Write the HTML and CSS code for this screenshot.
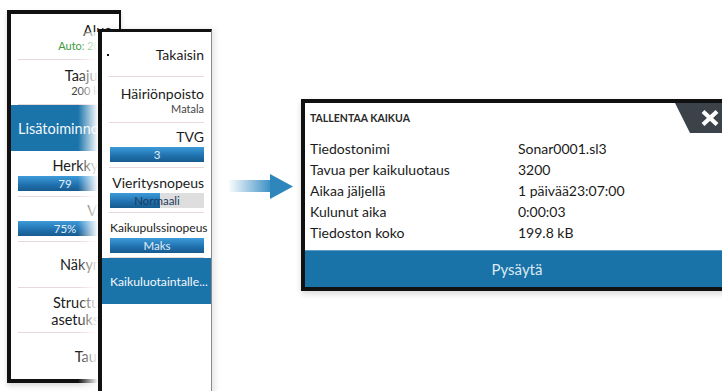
FILE: index.html
```html
<!DOCTYPE html>
<html>
    <head>
        <meta charset="utf-8">
        <link rel="stylesheet" href="styles.css">
    </head>
    <body>
        <div class="canvas">
            <div class="menu menu-main">
                <div class="item">
                    <div class="label">Alue</div>
                    <div class="sub auto">Auto: 20 m</div>
                </div>
                <div class="item">
                    <div class="label">Taajuus</div>
                    <div class="sub">200 kHz</div>
                </div>
                <div class="item active">
                    <div class="label">Lisätoiminnot</div>
                </div>
                <div class="item">
                    <div class="label">Herkkyys</div>
                    <div class="bar"><div class="fill" style="width:100%"></div><span>79</span></div>
                </div>
                <div class="item">
                    <div class="label">Väri</div>
                    <div class="bar"><div class="fill" style="width:100%"></div><span>75%</span></div>
                </div>
                <div class="item">
                    <div class="label">Näkymä</div>
                </div>
                <div class="item">
                    <div class="label">Structure<br>asetukset</div>
                </div>
                <div class="item">
                    <div class="label">Tauko</div>
                </div>
            </div>

            <div class="menu menu-sub">
                <div class="item back">
                    <span class="dot"></span>
                    <div class="label">Takaisin</div>
                </div>
                <div class="item">
                    <div class="label">Häiriönpoisto</div>
                    <div class="sub">Matala</div>
                </div>
                <div class="item">
                    <div class="label">TVG</div>
                    <div class="bar"><div class="fill" style="width:100%"></div><span>3</span></div>
                </div>
                <div class="item">
                    <div class="label">Vieritysnopeus</div>
                    <div class="bar"><div class="fill" style="width:53%"></div><span class="dark">Normaali</span></div>
                </div>
                <div class="item">
                    <div class="label long">Kaikupulssinopeus</div>
                    <div class="bar"><div class="fill" style="width:100%"></div><span>Maks</span></div>
                </div>
                <div class="item active">
                    <div class="label">Kaikuluotaintalle...</div>
                </div>
            </div>

            <svg class="arrow" width="70" height="28" viewBox="0 0 70 28">
                <defs>
                    <linearGradient id="shaft" x1="0" x2="1" y1="0" y2="0">
                        <stop offset="0" stop-color="#3a8fc4" stop-opacity="0"/>
                        <stop offset="1" stop-color="#3a8fc4"/>
                    </linearGradient>
                </defs>
                <rect x="3" y="8" width="43" height="12" fill="url(#shaft)"/>
                <polygon points="45,2 68,14.5 45,27" fill="#2f86bd"/>
            </svg>

            <div class="dialog">
                <div class="dlg-head">
                    <div class="dlg-title">TALLENTAA KAIKUA</div>
                    <div class="dlg-close">
                        <svg width="18" height="16" viewBox="0 0 18 16">
                            <path d="M2 1.5 L16 14.5 M16 1.5 L2 14.5" stroke="#fff" stroke-width="4.2"/>
                        </svg>
                    </div>
                </div>
                <div class="dlg-body">
                    <div class="row"><span>Tiedostonimi</span><span>Sonar0001.sl3</span></div>
                    <div class="row"><span>Tavua per kaikuluotaus</span><span>3200</span></div>
                    <div class="row"><span>Aikaa jäljellä</span><span>1 päivää23:07:00</span></div>
                    <div class="row"><span>Kulunut aika</span><span>0:00:03</span></div>
                    <div class="row"><span>Tiedoston koko</span><span>199.8 kB</span></div>
                </div>
                <div class="dlg-btn">Pysäytä</div>
            </div>
        </div>
    </body>
</html>
```

FILE: styles.css
```css
*{
    margin: 0;
    padding: 0;
    box-sizing: border-box;
}
body{
    width: 722px;
    height: 391px;
    overflow: hidden;
    background: #fff;
    color: #1b1b1b;
    font-family: Lato, sans-serif;
}
.canvas{
    position: relative;
    width: 722px;
    height: 391px;
}

/* side menus */
.menu{
    position: absolute;
    display: grid;
    grid-template-columns: minmax(0, 1fr);
    background: #fff;
}
.menu-main{
    left: 7px;
    top: 10px;
    width: 114px;
    height: 373px;
    border: 4px solid #111;
    border-right-width: 2px;
    grid-template-rows: repeat(8, 1fr);
    box-shadow: 0 3px 5px rgba(0,0,0,.15);
}
.menu-sub{
    left: 98px;
    top: 29px;
    width: 114px;
    height: 380px;
    border-left: 4px solid #111;
    border-top: 3px solid #111;
    border-right: 1px solid #8a8a8a;
    grid-auto-rows: 45.3px;
    align-content: start;
    box-shadow: 3px 0 6px rgba(0,0,0,.1);
}
/* white fade over the menu underneath */
.menu-sub::before{
    content: '';
    position: absolute;
    left: -24px;
    top: 0;
    bottom: 0;
    width: 20px;
    background: linear-gradient(to right, rgba(255,255,255,0), #fff);
}
.item{
    display: flex;
    flex-direction: column;
    justify-content: center;
    text-align: right;
    white-space: nowrap;
    padding: 0 7px;
    background: linear-gradient(#e8d7db, #e8d7db) no-repeat center bottom / calc(100% - 14px) 1px;
}
.menu-sub .item{
    padding: 0 7px 0 8px;
    overflow: hidden;
}
.item:last-child{
    background: none;
}
.item.active{
    background: #1b74a9;
    color: #f2f7fb;
    text-align: left;
}
.item.back{
    flex-direction: row;
    align-items: center;
    justify-content: space-between;
}
.dot{
    width: 2px;
    height: 2px;
    margin-left: -3px;
    background: #111;
}
.label{
    font-size: 14px;
    line-height: 17px;
}
.menu-main .label{
    font-size: 14.5px;
}
.label.long{
    font-size: 12px;
}
.menu-sub .active .label{
    font-size: 12.2px;
}
.sub{
    font-size: 11px;
    line-height: 13px;
    color: #444;
}
.sub.auto{
    color: #3a9a3a;
}
.bar{
    display: grid;
    height: 15px;
    margin-top: 2px;
    background: #dedede;
}
.bar > *{
    grid-area: 1 / 1;
}
.fill{
    justify-self: start;
    height: 100%;
    background: linear-gradient(#3d9bd9, #1f70ad 60%, #175b8f);
}
.bar span{
    text-align: center;
    font-size: 11.5px;
    line-height: 15px;
    color: #e4eef7;
}
.bar span.dark{
    color: #1d3b5c;
}

.arrow{
    position: absolute;
    left: 225px;
    top: 172px;
}

/* record dialog */
.dialog{
    position: absolute;
    left: 301px;
    top: 99px;
    width: 432px;
    border: 4px solid #111;
    background: #fff;
    box-shadow: 0 3px 6px rgba(0,0,0,.15);
}
.dlg-head{
    display: flex;
    align-items: center;
    height: 30px;
}
.dlg-title{
    flex: 1;
    padding-left: 5px;
    font-size: 10.5px;
    font-weight: bold;
    color: #2a2a2a;
}
.dlg-close{
    display: flex;
    align-items: center;
    justify-content: center;
    width: 54px;
    height: 30px;
    padding-left: 15px;
    background: #3b4249;
    clip-path: polygon(0 0, 100% 0, 100% 100%, 15px 100%);
}
.dlg-body{
    padding: 4.5px 0 7.5px 5px;
}
.row{
    display: grid;
    grid-template-columns: 208px 1fr;
    font-size: 14px;
    line-height: 21px;
}
.dlg-btn{
    height: 37px;
    border-top: 1px solid #5d9dc7;
    background: #1a73a8;
    color: #dbe8f2;
    font-size: 15px;
    line-height: 36px;
    text-align: center;
}
```
